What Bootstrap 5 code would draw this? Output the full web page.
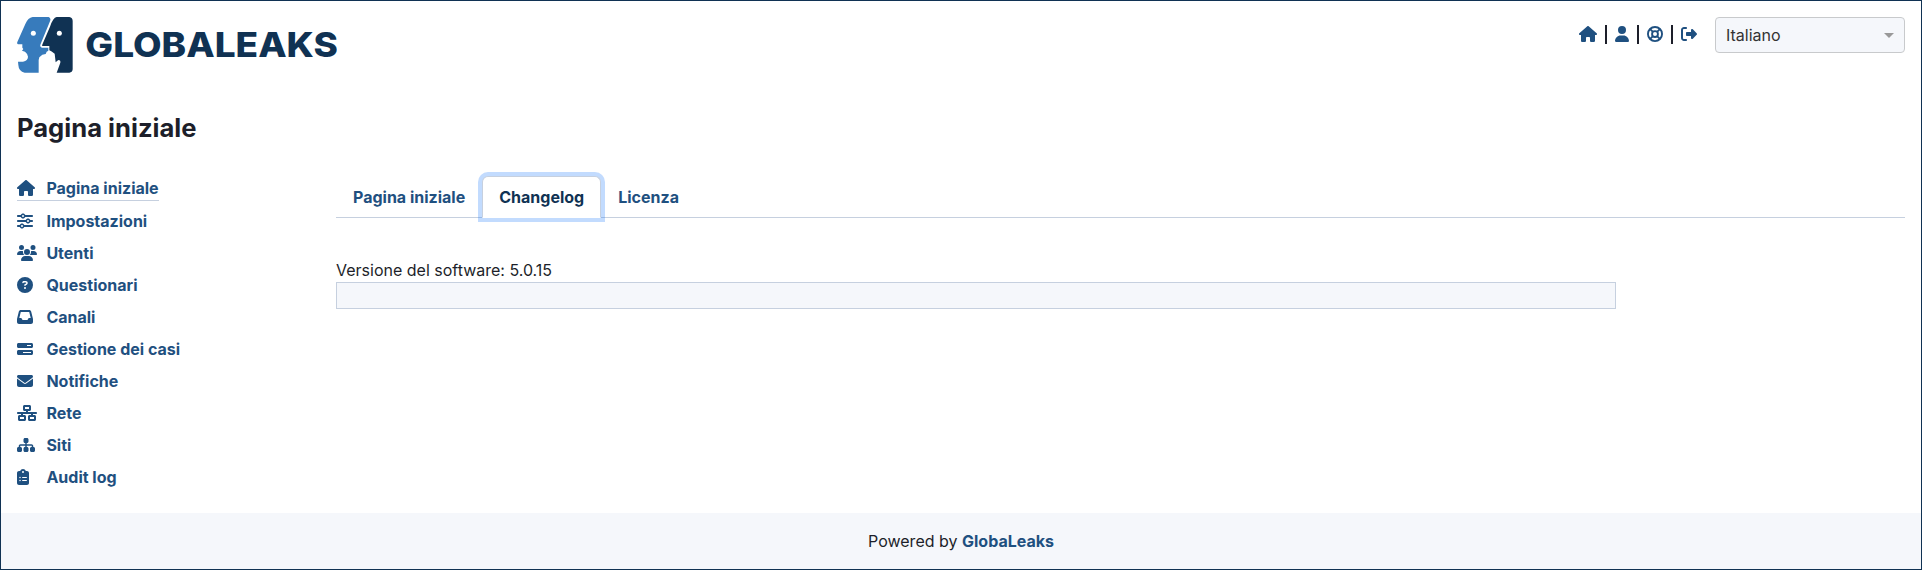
<!DOCTYPE html>
<html lang="it">
<head>
<meta charset="utf-8">
<meta name="viewport" content="width=device-width, initial-scale=1">
<title>GlobaLeaks</title>
<link href="https://cdn.jsdelivr.net/npm/bootstrap@5.3.0/dist/css/bootstrap.min.css" rel="stylesheet">
<style>
:root { --gl-navy: #103253; --gl-link: #1f5080; --gl-line: #c6d0df; --gl-pale: #f5f7fb; --gl-text: #1d1f2a; }
body { font-family: Inter, sans-serif; color: var(--gl-text); border: 1px solid var(--gl-navy); height: 570px; overflow: hidden; }
a { color: var(--gl-link); font-weight: 700; text-decoration: none; }
.gl-ico { height: 16px; width: auto; fill: currentColor; display: block; flex: none; }
.gl-header { height: 95px; }
.gl-logo { display: block; width: 320px; height: 56px; }
.gl-tools { height: 34px; gap: 7.8px; }
.gl-bar { width: 2.4px; height: 19px; background: var(--gl-text); }
.gl-lang { width: 190px; height: 36px; background: var(--gl-pale); border: 1px solid #c8cacc; border-radius: 4px; color: #333; padding: 0 10px; margin-left: 18px; }
.gl-caret { border: 5px solid transparent; border-top-color: #999; border-bottom: 0; }
.gl-title { font-size: 25.6px; font-weight: 700; line-height: 31px; height: 64px; }
.gl-side { width: 319px; }
.gl-side a { line-height: 24px; }
.gl-side a.active { border-bottom: 1px solid var(--gl-line); }
.gl-slot { width: 29.4px; }
.gl-tabs { --bs-nav-tabs-border-color: var(--gl-line); --bs-nav-link-color: var(--gl-link); }
.gl-tabs .nav-link { font-weight: 700; }
.gl-tabs .nav-link.active { color: var(--gl-navy); border-color: var(--gl-line) var(--gl-line) #fff; box-shadow: 0 0 0 4px rgba(13,110,253,.25); position: relative; }
.gl-log { width: 1280px; height: 27px; background: var(--gl-pale); border: 1px solid var(--gl-line); }
.gl-foot { background: var(--gl-pale); height: 56px; }
</style>
</head>
<body class="d-flex flex-column">
<header class="gl-header d-flex justify-content-between align-items-start px-3 pt-3">
  <a href="#" aria-label="GlobaLeaks">
    <svg class="gl-logo" viewBox="51 51 960 168">
      <g transform="translate(30 30)">
        <path fill="#377bbc" d="M68 21H116Q124 24 120 34L91 104Q89 112 96 113H115V122L110 125L107 132L97 134L88 142L86 150V188H44Q26 184 25 165L24 155H39Q54 152 54 140Q53 131 45 125L36 122L40 117L37 113V103H25Q20 102 22 96L46 42Q54 23 68 21Z"/>
        <path fill="#103253" d="M140 21H178Q188 23 188 33V178Q187 188 178 188H140L151 158V153Q147 148 142 152L137 157L134 131Q124 123 118 121V108H97Q95 107 98 101L120 50Q129 23 140 21Z"/>
        <circle cx="70" cy="70" r="7.5" fill="#fff"/><circle cx="148" cy="70" r="7.5" fill="#fff"/>
      </g>
      <text x="256" y="171" font-family="Inter, sans-serif" font-weight="800" font-size="103" fill="#103253" textLength="758" lengthAdjust="spacingAndGlyphs">GLOBALEAKS</text>
    </svg>
  </a>
  <div class="d-flex align-items-start">
    <nav class="gl-tools d-flex align-items-center">
      <a href="#" aria-label="Home"><svg class="gl-ico" viewBox="0 0 576 512"><path id="house" d="M575.8 255.5c0 18-15 32.1-32 32.1l-32 0 .7 160.2c0 2.7-.2 5.4-.5 8.1l0 16.2c0 22.1-17.9 40-40 40l-16 0c-1.1 0-2.2 0-3.3-.1c-1.4 .1-2.8 .1-4.2 .1L416 512l-24 0c-22.1 0-40-17.9-40-40l0-24 0-64c0-17.7-14.3-32-32-32l-64 0c-17.7 0-32 14.3-32 32l0 64 0 24c0 22.1-17.9 40-40 40l-24 0-31.9 0c-1.5 0-3-.1-4.5-.2c-1.2 .1-2.4 .2-3.6 .2l-16 0c-22.1 0-40-17.9-40-40l0-112c0-.9 0-1.9 .1-2.8l0-69.7-32 0c-18 0-32-14-32-32.1c0-9 3-17 10-24L266.4 8c7-7 15-8 22-8s15 2 21 7L564.8 231.5c8 7 12 15 11 24z"/></svg></a>
      <span class="gl-bar"></span>
      <a href="#" aria-label="Utente"><svg class="gl-ico" viewBox="0 0 448 512"><path d="M224 256A128 128 0 1 0 224 0a128 128 0 1 0 0 256zm-45.7 48C79.8 304 0 383.8 0 482.3C0 498.7 13.3 512 29.7 512l388.6 0c16.4 0 29.7-13.3 29.7-29.7C448 383.8 368.2 304 269.7 304l-91.4 0z"/></svg></a>
      <span class="gl-bar"></span>
      <a href="#" aria-label="Aiuto"><svg class="gl-ico" viewBox="0 0 512 512"><g fill="none" stroke="currentColor" stroke-width="60"><circle cx="256" cy="256" r="226"/><circle cx="256" cy="256" r="94"/><path d="M94 94l95 95M323 323l95 95M418 94l-95 95M189 323l-95 95"/></g></svg></a>
      <span class="gl-bar"></span>
      <a href="#" aria-label="Esci"><svg class="gl-ico" viewBox="0 0 512 512"><path d="M377.9 105.9L500.7 228.7c7.2 7.2 11.3 17.1 11.3 27.3s-4.1 20.1-11.3 27.3L377.9 406.1c-6.4 6.4-15 9.9-24 9.9c-18.7 0-33.9-15.2-33.9-33.9l0-62.1-128 0c-17.7 0-32-14.3-32-32l0-64c0-17.7 14.3-32 32-32l128 0 0-62.1c0-18.7 15.2-33.9 33.9-33.9c9 0 17.6 3.6 24 9.9zM160 96L96 96c-17.7 0-32 14.3-32 32l0 256c0 17.7 14.3 32 32 32l64 0c17.7 0 32 14.3 32 32s-14.3 32-32 32l-64 0c-53 0-96-43-96-96L0 128C0 75 43 32 96 32l64 0c17.7 0 32 14.3 32 32s-14.3 32-32 32z"/></svg></a>
    </nav>
    <div class="gl-lang d-flex align-items-center justify-content-between"><span>Italiano</span><span class="gl-caret"></span></div>
  </div>
</header>
<main class="flex-grow-1 px-3 pt-3">
  <h1 class="gl-title mb-0">Pagina iniziale</h1>
  <div class="d-flex">
    <nav class="gl-side d-flex flex-column align-items-start gap-2">
      <a class="active d-flex align-items-center" href="#"><span class="gl-slot"><svg class="gl-ico" viewBox="0 0 576 512"><use href="#house"/></svg></span>Pagina iniziale</a>
      <a class="d-flex align-items-center" href="#"><span class="gl-slot"><svg class="gl-ico" viewBox="0 0 512 512"><path d="M0 416c0 17.7 14.3 32 32 32l54.7 0c12.3 28.3 40.5 48 73.3 48s61-19.7 73.3-48L480 448c17.7 0 32-14.3 32-32s-14.3-32-32-32l-246.7 0c-12.3-28.3-40.5-48-73.3-48s-61 19.7-73.3 48L32 384c-17.7 0-32 14.3-32 32zm128 0a32 32 0 1 1 64 0 32 32 0 1 1 -64 0zM320 256a32 32 0 1 1 64 0 32 32 0 1 1 -64 0zm32-80c-32.8 0-61 19.7-73.3 48L32 224c-17.7 0-32 14.3-32 32s14.3 32 32 32l246.7 0c12.3 28.3 40.5 48 73.3 48s61-19.7 73.3-48l54.7 0c17.7 0 32-14.3 32-32s-14.3-32-32-32l-54.7 0c-12.3-28.3-40.5-48-73.3-48zM192 128a32 32 0 1 1 0-64 32 32 0 1 1 0 64zm73.3-64C253 35.7 224.8 16 192 16s-61 19.7-73.3 48L32 64C14.3 64 0 78.3 0 96s14.3 32 32 32l86.7 0c12.3 28.3 40.5 48 73.3 48s61-19.7 73.3-48L480 128c17.7 0 32-14.3 32-32s-14.3-32-32-32L265.3 64z"/></svg></span>Impostazioni</a>
      <a class="d-flex align-items-center" href="#"><span class="gl-slot"><svg class="gl-ico" viewBox="0 0 640 512"><path d="M144 0a80 80 0 1 1 0 160A80 80 0 1 1 144 0zM512 0a80 80 0 1 1 0 160A80 80 0 1 1 512 0zM0 298.7C0 239.8 47.8 192 106.7 192l42.7 0c15.9 0 31 3.5 44.6 9.7c-1.3 7.2-1.9 14.7-1.9 22.3c0 38.2 16.8 72.5 43.3 96c-.2 0-.4 0-.7 0L21.3 320C9.6 320 0 310.4 0 298.7zM405.3 320c-.2 0-.4 0-.7 0c26.6-23.5 43.3-57.8 43.3-96c0-7.6-.7-15-1.9-22.3c13.6-6.3 28.7-9.7 44.6-9.7l42.7 0C592.2 192 640 239.8 640 298.7c0 11.8-9.6 21.3-21.3 21.3l-213.3 0zM224 224a96 96 0 1 1 192 0 96 96 0 1 1 -192 0zM128 485.3C128 411.7 187.7 352 261.3 352l117.3 0C452.3 352 512 411.7 512 485.3c0 14.7-11.9 26.7-26.7 26.7l-330.7 0c-14.7 0-26.7-11.9-26.7-26.7z"/></svg></span>Utenti</a>
      <a class="d-flex align-items-center" href="#"><span class="gl-slot"><svg class="gl-ico" viewBox="0 0 512 512"><path d="M256 512A256 256 0 1 0 256 0a256 256 0 1 0 0 512zM169.8 165.3c7.9-22.3 29.1-37.3 52.8-37.3l58.3 0c34.9 0 63.1 28.3 63.1 63.1c0 22.6-12.1 43.5-31.7 54.8L280 264.4c-.2 13-10.9 23.6-24 23.6c-13.3 0-24-10.7-24-24l0-13.5c0-8.6 4.6-16.5 12.1-20.8l44.3-25.4c4.7-2.7 7.6-7.7 7.6-13.1c0-8.4-6.8-15.1-15.1-15.1l-58.3 0c-3.4 0-6.4 2.1-7.5 5.3l-.4 1.2c-4.4 12.5-18.2 19-30.6 14.6s-19-18.2-14.6-30.6l.4-1.2zM224 352a32 32 0 1 1 64 0 32 32 0 1 1 -64 0z"/></svg></span>Questionari</a>
      <a class="d-flex align-items-center" href="#"><span class="gl-slot"><svg class="gl-ico" viewBox="0 0 512 512"><path d="M121 32C91.6 32 66 52 58.9 80.5L1.9 308.4C.6 313.5 0 318.7 0 323.9L0 416c0 35.3 28.7 64 64 64l384 0c35.3 0 64-28.7 64-64l0-92.1c0-5.2-.6-10.4-1.9-15.5l-57-227.9C446 52 420.4 32 391 32L121 32zm0 64l270 0 48 192-51.2 0c-12.1 0-23.2 6.8-28.6 17.7l-14.3 28.6c-5.4 10.8-16.5 17.7-28.6 17.7l-120.4 0c-12.1 0-23.2-6.8-28.6-17.7l-14.3-28.6c-5.4-10.8-16.5-17.7-28.6-17.7L73 288 121 96z"/></svg></span>Canali</a>
      <a class="d-flex align-items-center" href="#"><span class="gl-slot"><svg class="gl-ico" viewBox="0 0 512 512"><path fill-rule="evenodd" d="M448 160l-128 0 0-32 128 0 0 32zM48 64C21.5 64 0 85.5 0 112l0 64c0 26.5 21.5 48 48 48l416 0c26.5 0 48-21.5 48-48l0-64c0-26.5-21.5-48-48-48L48 64zM448 352l0 32-256 0 0-32 256 0zM48 288c-26.5 0-48 21.5-48 48l0 64c0 26.5 21.5 48 48 48l416 0c26.5 0 48-21.5 48-48l0-64c0-26.5-21.5-48-48-48L48 288z"/></svg></span>Gestione dei casi</a>
      <a class="d-flex align-items-center" href="#"><span class="gl-slot"><svg class="gl-ico" viewBox="0 0 512 512"><path d="M48 64C21.5 64 0 85.5 0 112c0 15.1 7.1 29.3 19.2 38.4L236.8 313.6c11.4 8.5 27 8.5 38.4 0L492.8 150.4c12.1-9.1 19.2-23.3 19.2-38.4c0-26.5-21.5-48-48-48L48 64zM0 176L0 384c0 35.3 28.7 64 64 64l384 0c35.3 0 64-28.7 64-64l0-208L294.4 339.2c-22.8 17.1-54 17.1-76.8 0L0 176z"/></svg></span>Notifiche</a>
      <a class="d-flex align-items-center" href="#"><span class="gl-slot"><svg class="gl-ico" viewBox="0 0 640 512"><path fill-rule="evenodd" d="M256 64l128 0 0 64-128 0 0-64zM240 0c-26.5 0-48 21.5-48 48l0 96c0 26.5 21.5 48 48 48l48 0 0 32L32 224c-17.7 0-32 14.3-32 32s14.3 32 32 32l96 0 0 32-48 0c-26.5 0-48 21.5-48 48l0 96c0 26.5 21.5 48 48 48l160 0c26.5 0 48-21.5 48-48l0-96c0-26.5-21.5-48-48-48l-48 0 0-32 256 0 0 32-48 0c-26.5 0-48 21.5-48 48l0 96c0 26.5 21.5 48 48 48l160 0c26.5 0 48-21.5 48-48l0-96c0-26.5-21.5-48-48-48l-48 0 0-32 96 0c17.7 0 32-14.3 32-32s-14.3-32-32-32l-256 0 0-32 48 0c26.5 0 48-21.5 48-48l0-96c0-26.5-21.5-48-48-48L240 0zM96 448l0-64 128 0 0 64L96 448zm320-64l128 0 0 64-128 0 0-64z"/></svg></span>Rete</a>
      <a class="d-flex align-items-center" href="#"><span class="gl-slot"><svg class="gl-ico" viewBox="0 0 576 512"><path d="M208 80c0-26.5 21.5-48 48-48l64 0c26.5 0 48 21.5 48 48l0 64c0 26.5-21.5 48-48 48l-8 0 0 40 152 0c30.9 0 56 25.1 56 56l0 32 8 0c26.5 0 48 21.5 48 48l0 64c0 26.5-21.5 48-48 48l-64 0c-26.5 0-48-21.5-48-48l0-64c0-26.5 21.5-48 48-48l8 0 0-32c0-4.4-3.6-8-8-8l-152 0 0 40 8 0c26.5 0 48 21.5 48 48l0 64c0 26.5-21.5 48-48 48l-64 0c-26.5 0-48-21.5-48-48l0-64c0-26.5 21.5-48 48-48l8 0 0-40-152 0c-4.4 0-8 3.6-8 8l0 32 8 0c26.5 0 48 21.5 48 48l0 64c0 26.5-21.5 48-48 48l-64 0c-26.5 0-48-21.5-48-48l0-64c0-26.5 21.5-48 48-48l8 0 0-32c0-30.9 25.1-56 56-56l152 0 0-40-8 0c-26.5 0-48-21.5-48-48l0-64z"/></svg></span>Siti</a>
      <a class="d-flex align-items-center" href="#"><span class="gl-slot"><svg class="gl-ico" viewBox="0 0 384 512"><path fill-rule="evenodd" d="M192 0c-41.8 0-77.4 26.7-90.5 64L64 64C28.7 64 0 92.7 0 128L0 448c0 35.3 28.7 64 64 64l256 0c35.3 0 64-28.7 64-64l0-320c0-35.3-28.7-64-64-64l-37.5 0C269.4 26.7 233.8 0 192 0zm0 64a32 32 0 1 1 0 64 32 32 0 1 1 0-64zM72 272a24 24 0 1 1 48 0 24 24 0 1 1 -48 0zm104-16l128 0c8.8 0 16 7.2 16 16s-7.2 16-16 16l-128 0c-8.8 0-16-7.2-16-16s7.2-16 16-16zM72 368a24 24 0 1 1 48 0 24 24 0 1 1 -48 0zm88 0c0-8.8 7.2-16 16-16l128 0c8.8 0 16 7.2 16 16s-7.2 16-16 16l-128 0c-8.8 0-16-7.2-16-16z"/></svg></span>Audit log</a>
    </nav>
    <section class="flex-grow-1">
      <ul class="nav nav-tabs gl-tabs">
        <li class="nav-item"><a class="nav-link" href="#">Pagina iniziale</a></li>
        <li class="nav-item"><a class="nav-link active" href="#">Changelog</a></li>
        <li class="nav-item"><a class="nav-link" href="#">Licenza</a></li>
      </ul>
      <div class="pt-3 mt-4">Versione del software: 5.0.15</div>
      <div class="gl-log"></div>
    </section>
  </div>
</main>
<footer class="gl-foot d-flex align-items-center justify-content-center"><span>Powered by <a href="#">GlobaLeaks</a></span></footer>
<script src="https://cdn.jsdelivr.net/npm/bootstrap@5.3.0/dist/js/bootstrap.bundle.min.js"></script>
</body>
</html>
